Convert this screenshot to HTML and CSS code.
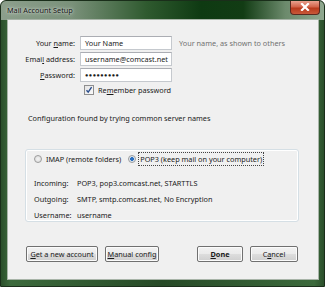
FILE: index.html
```html
<!DOCTYPE html>
<html>
<head>
<meta charset="utf-8">
<link rel="stylesheet" href="styles.css">
</head>
<body>
<div class="window">
  <div class="titlebar">
    <span class="title">Mail Account Setup</span>
    <span class="close"><svg width="10" height="8" viewBox="0 0 10 8"><path d="M2 1 L8 7 M8 1 L2 7" stroke="#fff" stroke-width="2.2" stroke-linecap="square"/></svg></span>
  </div>
  <div class="client">
    <div class="form">
      <label class="lbl">Your <u>n</u>ame:</label>
      <div class="field">Your Name</div>
      <span class="hint">Your name, as shown to others</span>
      <label class="lbl">Emai<u>l</u> address:</label>
      <div class="field">username@comcast.net</div>
      <span></span>
      <label class="lbl"><u>P</u>assword:</label>
      <div class="field dots">●●●●●●●●●</div>
      <span></span>
      <span></span>
      <div class="remember"><span class="check"><svg width="8" height="8" viewBox="0 0 8 8"><path d="M1.5 4.2 L3.2 6.2 L6.6 1.2" stroke="#2a4d8c" stroke-width="1.4" fill="none"/></svg></span><span>Re<u>m</u>ember password</span></div>
    </div>
    <p class="status">Configuration found by trying common server names</p>
    <div class="group">
      <div class="radios">
        <span class="radio"></span><span class="rlabel">IMAP (remote folders)</span>
        <span class="radio on"></span><span class="rlabel focus">POP3 (keep mail on your computer)</span>
      </div>
      <div class="info">
        <span>Incoming:</span><span>POP3, pop3.comcast.net, STARTTLS</span>
        <span>Outgoing:</span><span>SMTP, smtp.comcast.net, No Encryption</span>
        <span>Username:</span><span>username</span>
      </div>
    </div>
    <div class="buttons">
      <button class="btn w71"><u>G</u>et a new account</button>
      <button class="btn w53"><u>M</u>anual config</button>
      <span class="spacer"></span>
      <button class="btn w45 bold"><u>D</u>one</button>
      <button class="btn w47">C<u>a</u>ncel</button>
    </div>
  </div>
</div>
</body>
</html>
```

FILE: styles.css
```css
html, body {
  margin: 0;
  padding: 0;
  width: 325px;
  height: 287px;
  overflow: hidden;
  background: #ffffff;
}
body {
  font-family: "Noto Sans", "Open Sans", sans-serif;
  font-size: 7.3px;
  color: #1a1a1a;
  white-space: nowrap;
}
u { text-decoration: underline; text-underline-offset: 1px; }
.window {
  width: 325px;
  height: 287px;
  box-sizing: border-box;
  display: flex;
  flex-direction: column;
  padding: 0 5px 6px 6px;
  background:
    linear-gradient(90deg, #8c9f8c 0%, #7a917a 22%, #2f5a2f 45%, #0e3a12 62%, #123c14 75%, #6c8a6c 88%, #8fa88f 100%) top / 100% 19px no-repeat,
    linear-gradient(90deg, #2b4f2b 0%, #3c6a3c 3%, #274a27 50%, #3c6a3c 97%, #2b4f2b 100%);
  border: 1px solid #1a2e1a;
  border-radius: 6px 6px 0 0;
}
.titlebar {
  height: 18px;
  display: flex;
  align-items: center;
  flex-shrink: 0;
}
.title {
  padding-left: 0;
  color: #141414;
  text-shadow: 0 0 4px rgba(255,255,255,0.8), 0 0 2px rgba(255,255,255,0.6);
}
.close {
  margin-left: auto;
  margin-top: -5px;
  margin-right: -1px;
  width: 30px;
  height: 14px;
  box-sizing: border-box;
  border: 1px solid #5a2a20;
  border-top: none;
  border-radius: 0 0 4px 4px;
  background: linear-gradient(180deg, #e9a18f 0%, #d2644a 45%, #b83a1c 55%, #c9593a 100%);
  display: flex;
  align-items: center;
  justify-content: center;
}
.client {
  flex: 1;
  background: #f0f0f0;
  border: 1px solid #a8b4a8;
  display: flex;
  flex-direction: column;
  padding: 16px 0 0 0;
}
.form {
  display: grid;
  grid-template-columns: 67px 92px auto;
  column-gap: 5px;
  row-gap: 2px;
  align-items: center;
}
.lbl { text-align: right; }
.field {
  height: 14px;
  box-sizing: border-box;
  background: #fff;
  border: 1px solid #c5c9ce;
  border-top-color: #abadb3;
  padding: 0 4px;
  line-height: 12px;
  overflow: hidden;
}
.dots { font-size: 5.5px; letter-spacing: 0.5px; }
.hint { color: #707070; padding-left: 2px; }
.remember {
  grid-column: 2 / 4;
  display: flex;
  align-items: center;
  gap: 4px;
  padding-left: 4px;
  height: 12px;
}
.check {
  width: 10px;
  height: 10px;
  box-sizing: border-box;
  border: 1px solid #8f8f8f;
  background: linear-gradient(135deg, #e4e4e4, #fafafa);
  display: flex;
  align-items: center;
  justify-content: center;
}
.status {
  margin: 16px 0 0 20px;
  line-height: 12px;
}
.group {
  margin: 25px 19px 0 17px;
  border: 1px solid #d5dfe5;
  border-radius: 3px;
  box-shadow: inset 0 0 0 1px #ffffff;
  padding: 2px 0 0 8px;
}
.radios {
  display: flex;
  align-items: center;
  height: 14px;
}
.radio {
  width: 8px;
  height: 8px;
  box-sizing: border-box;
  border-radius: 50%;
  border: 1px solid #9c9c9c;
  background: radial-gradient(circle, #f4f4f4 0%, #d8d8d8 100%);
  margin-right: 3px;
}
.radio.on {
  background: radial-gradient(circle, #2a6fc0 0 1.6px, #dfe8f0 2.2px);
  margin-left: 6px;
}
.rlabel { padding: 0 1px; line-height: 12px; }
.rlabel.focus { outline: 1px dotted #444; outline-offset: 0; }
.info {
  display: grid;
  grid-template-columns: 43px auto;
  row-gap: 4px;
  margin-top: 11px;
  line-height: 12px;
}
.buttons {
  display: flex;
  align-items: center;
  margin: 24px 20px 0 18px;
}
.spacer { flex: 1; }
.btn {
  height: 16px;
  box-sizing: border-box;
  padding: 0;
  font-family: inherit;
  font-size: 7.3px;
  color: #1a1a1a;
  border: 1px solid #707070;
  border-radius: 2px;
  background: linear-gradient(180deg, #f2f2f2 0%, #ebebeb 48%, #dddddd 52%, #cfcfcf 100%);
  box-shadow: inset 0 0 0 1px #fbfbfb;
  line-height: 14px;
  white-space: nowrap;
}
.w71 { width: 72px; }
.w53 { width: 54px; margin-left: 7px; }
.w45 { width: 46px; }
.w47 { width: 48px; margin-left: 7px; }
.bold { font-weight: bold; }
```
